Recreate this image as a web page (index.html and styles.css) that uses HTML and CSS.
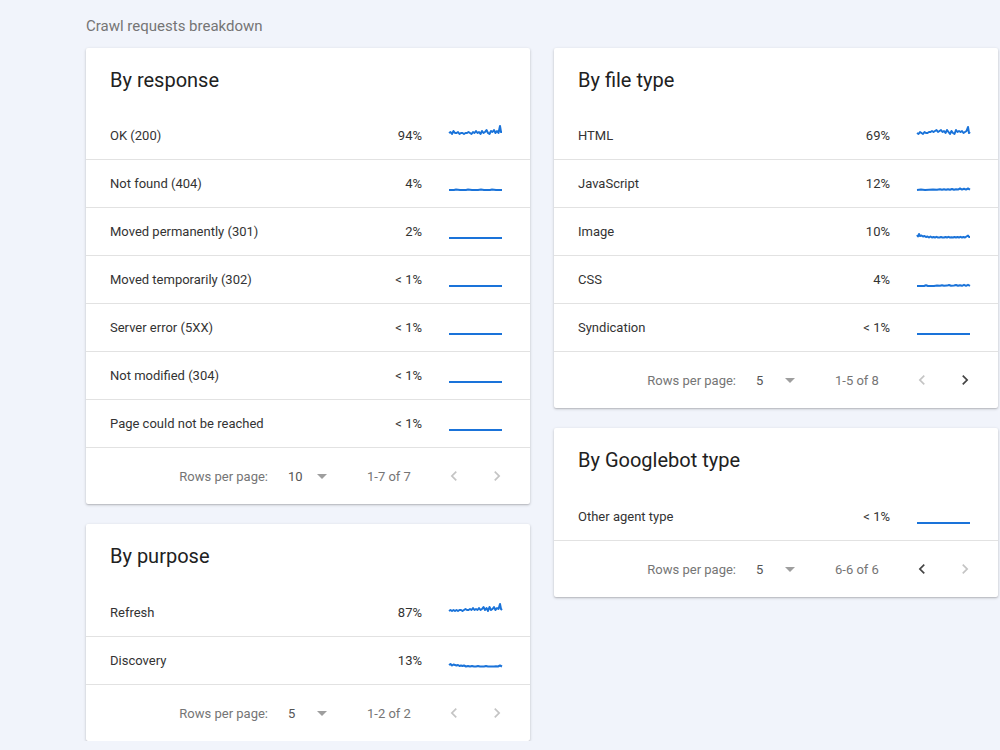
FILE: index.html
```html
<!DOCTYPE html>
<html>
<head>
<meta charset="utf-8">
<link rel="stylesheet" href="styles.css">
</head>
<body>
<div class="page">
  <div class="page-title">Crawl requests breakdown</div>
  <div class="columns">
    <div class="col">
      <section class="card">
        <h2 class="card-title">By response</h2>
        <div class="row"><span class="label">OK (200)</span><span class="pct">94%</span>
          <svg class="spark" viewBox="0 0 55 24"><polyline points="1,11 2.5,10 4,12 5.5,9 7,11 8.5,11 10,10 11.5,12 13,11 14.5,11 16,12 17.5,11 19,11 20.5,10 22,11 23.5,12 25,10 26.5,11 28,9 29.5,11 31,10 32.5,12 34,9 35.5,11 37,10 38.5,8 40,11 41.5,12 43,9 44.5,10 46,8 47.5,11 49,9 50.5,11 52,4 53,10 54,10"/></svg></div>
        <div class="row"><span class="label">Not found (404)</span><span class="pct">4%</span>
          <svg class="spark" viewBox="0 0 55 24"><polyline points="1,20 6,20 8,19.6 12,20 18,20 20,19.6 24,20 30,20 33,19.6 36,20 42,20 44,19.6 48,20 54,20"/></svg></div>
        <div class="row"><span class="label">Moved permanently (301)</span><span class="pct">2%</span>
          <svg class="spark" viewBox="0 0 55 24"><polyline points="1,20 54,20"/></svg></div>
        <div class="row"><span class="label">Moved temporarily (302)</span><span class="pct">&lt; 1%</span>
          <svg class="spark" viewBox="0 0 55 24"><polyline points="1,20 54,20"/></svg></div>
        <div class="row"><span class="label">Server error (5XX)</span><span class="pct">&lt; 1%</span>
          <svg class="spark" viewBox="0 0 55 24"><polyline points="1,20 54,20"/></svg></div>
        <div class="row"><span class="label">Not modified (304)</span><span class="pct">&lt; 1%</span>
          <svg class="spark" viewBox="0 0 55 24"><polyline points="1,20 54,20"/></svg></div>
        <div class="row"><span class="label">Page could not be reached</span><span class="pct">&lt; 1%</span>
          <svg class="spark" viewBox="0 0 55 24"><polyline points="1,20 54,20"/></svg></div>
        <div class="footer">
          <span class="rpp-label">Rows per page:</span>
          <span class="rpp-select"><span class="rpp-value">10</span><svg class="drop" viewBox="0 0 24 24"><path d="M7 10l5 5 5-5z"/></svg></span>
          <span class="range">1-7 of 7</span>
          <svg class="nav off prev" viewBox="0 0 24 24"><path d="M15.41 7.41L14 6l-6 6 6 6 1.41-1.41L10.83 12z"/></svg>
          <svg class="nav off next" viewBox="0 0 24 24"><path d="M10 6L8.59 7.41 13.17 12l-4.58 4.59L10 18l6-6z"/></svg>
        </div>
      </section>
      <section class="card">
        <h2 class="card-title">By purpose</h2>
        <div class="row"><span class="label">Refresh</span><span class="pct">87%</span>
          <svg class="spark" viewBox="0 0 55 24"><polyline points="1,12 2.5,11 4,12 5.5,11 7,12 8.5,11 10,12 11.5,11 13,11 14.5,12 16,11 17.5,10 19,11 20.5,11 22,10 23.5,11 25,9 26.5,11 28,10 29.5,11 31,9 32.5,11 34,10 35.5,8 37,11 38.5,9 40,12 41.5,8 43,11 44.5,10 46,8 47.5,11 49,9 50.5,10 52,5 53,10 54,11"/></svg></div>
        <div class="row"><span class="label">Discovery</span><span class="pct">13%</span>
          <svg class="spark" viewBox="0 0 55 24"><polyline points="1,18 2.5,17 4,18.5 5.5,17.5 7,18 8.5,18.5 10,18 11.5,19 13,18.5 14.5,19 16,18.5 18,19.5 20,19 22,19.5 24,19 26,19.5 28,19.5 30,19 32,19.5 34,19.5 36,19.5 38,19 40,19.5 42,19.5 44,19.5 46,19.5 48,19.2 50,19.5 52,18.5 54,19.5"/></svg></div>
        <div class="footer">
          <span class="rpp-label">Rows per page:</span>
          <span class="rpp-select"><span class="rpp-value">5</span><svg class="drop" viewBox="0 0 24 24"><path d="M7 10l5 5 5-5z"/></svg></span>
          <span class="range">1-2 of 2</span>
          <svg class="nav off prev" viewBox="0 0 24 24"><path d="M15.41 7.41L14 6l-6 6 6 6 1.41-1.41L10.83 12z"/></svg>
          <svg class="nav off next" viewBox="0 0 24 24"><path d="M10 6L8.59 7.41 13.17 12l-4.58 4.59L10 18l6-6z"/></svg>
        </div>
      </section>
    </div>
    <div class="col">
      <section class="card">
        <h2 class="card-title">By file type</h2>
        <div class="row"><span class="label">HTML</span><span class="pct">69%</span>
          <svg class="spark" viewBox="0 0 55 24"><polyline points="1,11 2.5,12 4,10 5.5,11 7,12 8.5,10 10,11 11.5,11 13,10 14.5,10 16,9 17.5,10 19,9 20.5,8 22,10 23.5,9 25,8 26.5,10 28,9 29.5,11 31,8 32.5,10 34,12 35.5,9 37,11 38.5,12 40,8 41.5,10 43,9 44.5,10 46,9 47.5,11 49,10 50.5,9 52,5 53,11 54,10"/></svg></div>
        <div class="row"><span class="label">JavaScript</span><span class="pct">12%</span>
          <svg class="spark" viewBox="0 0 55 24"><polyline points="1,20 5,19.6 9,20 13,19.8 17,19.6 21,19.8 24,19.2 26,19.8 28,19.3 30,19.8 32,19.2 34,19.8 36,19 38,19.8 40,19.2 42,19.6 44,18.5 46,19.6 48,18.8 50,19.6 52,18.5 54,19.6"/></svg></div>
        <div class="row"><span class="label">Image</span><span class="pct">10%</span>
          <svg class="spark" viewBox="0 0 55 24"><polyline points="1,17 2,18.5 3,16 4,18 5.5,17.5 7,18.5 8.5,18 10,19 11.5,18.5 13,19.5 14.5,18.5 16,19.5 17.5,19 19,19.5 20.5,18.8 22,19.5 23.5,19.5 25,19 26.5,19.5 28,19.5 29.5,19 31,19.5 32.5,18.8 34,19.5 35.5,19.2 37,19.5 38.5,19 40,19.5 41.5,19 43,19.5 44.5,18.8 46,19.5 47.5,19 49,19.5 50.5,18.5 52,17.5 53,19 54,19"/></svg></div>
        <div class="row"><span class="label">CSS</span><span class="pct">4%</span>
          <svg class="spark" viewBox="0 0 55 24"><polyline points="1,20 8,20 10,19.2 12,20 18,20 21,19.6 24,19.8 26,19.3 28,19.8 31,19.6 33,19 35,19.8 38,19.5 40,19 42,19.8 44,19.2 46,19.8 48,18.8 50,19.8 52,18.8 54,19.8"/></svg></div>
        <div class="row"><span class="label">Syndication</span><span class="pct">&lt; 1%</span>
          <svg class="spark" viewBox="0 0 55 24"><polyline points="1,20 54,20"/></svg></div>
        <div class="footer">
          <span class="rpp-label">Rows per page:</span>
          <span class="rpp-select"><span class="rpp-value">5</span><svg class="drop" viewBox="0 0 24 24"><path d="M7 10l5 5 5-5z"/></svg></span>
          <span class="range">1-5 of 8</span>
          <svg class="nav off prev" viewBox="0 0 24 24"><path d="M15.41 7.41L14 6l-6 6 6 6 1.41-1.41L10.83 12z"/></svg>
          <svg class="nav on next" viewBox="0 0 24 24"><path d="M10 6L8.59 7.41 13.17 12l-4.58 4.59L10 18l6-6z"/></svg>
        </div>
      </section>
      <section class="card">
        <h2 class="card-title">By Googlebot type</h2>
        <div class="row"><span class="label">Other agent type</span><span class="pct">&lt; 1%</span>
          <svg class="spark" viewBox="0 0 55 24"><polyline points="1,20 54,20"/></svg></div>
        <div class="footer">
          <span class="rpp-label">Rows per page:</span>
          <span class="rpp-select"><span class="rpp-value">5</span><svg class="drop" viewBox="0 0 24 24"><path d="M7 10l5 5 5-5z"/></svg></span>
          <span class="range">6-6 of 6</span>
          <svg class="nav on prev" viewBox="0 0 24 24"><path d="M15.41 7.41L14 6l-6 6 6 6 1.41-1.41L10.83 12z"/></svg>
          <svg class="nav off next" viewBox="0 0 24 24"><path d="M10 6L8.59 7.41 13.17 12l-4.58 4.59L10 18l6-6z"/></svg>
        </div>
      </section>
    </div>
  </div>
</div>
</body>
</html>
```
FILE: styles.css
```css
* { box-sizing: border-box; }
html, body { margin: 0; padding: 0; }
body {
  background: #f1f4fb;
  font-family: Roboto, "Liberation Sans", sans-serif;
  color: #212121;
}
.page {
  padding: 16px 2px 0 86px;
}
.page-title {
  font-size: 15px;
  line-height: 20px;
  color: #757575;
  height: 32px;
}
.columns {
  display: flex;
  gap: 24px;
  align-items: flex-start;
}
.col {
  width: 444px;
  display: flex;
  flex-direction: column;
  gap: 20px;
}
.card {
  background: #fff;
  border-radius: 2px;
  box-shadow: 0 1px 3px rgba(0,0,0,0.22), 0 1px 1px rgba(0,0,0,0.08);
}
.card-title {
  margin: 0;
  padding: 20px 24px 0 24px;
  height: 64px;
  font-size: 20px;
  line-height: 24px;
  font-weight: 400;
  color: #212121;
}
.card + .card .card-title {
  height: 65px;
}
.row {
  height: 48px;
  display: flex;
  align-items: center;
  padding: 0 27px 0 24px;
  border-bottom: 1px solid #e2e2e2;
  font-size: 13px;
  color: #333;
}
.label { flex: 1; }
.pct {
  width: 60px;
  text-align: right;
  margin-right: 26px;
}
.spark {
  width: 55px;
  height: 24px;
  margin-top: -4px;
  overflow: visible;
}
.spark polyline {
  fill: none;
  stroke: #1a73d9;
  stroke-width: 2;
  stroke-linejoin: round;
}
.footer {
  height: 56px;
  display: flex;
  align-items: center;
  justify-content: flex-end;
  padding-right: 21px;
  font-size: 13px;
  color: #757575;
}
.rpp-label { margin-right: 20px; flex: none; }
.rpp-select {
  flex: none;
  width: 46px;
  margin-right: 33px;
  display: flex;
  align-items: center;
  justify-content: space-between;
}
.rpp-value { color: #555; }
.drop { width: 24px; height: 24px; fill: #9e9e9e; flex: none; }
.range { width: 73px; flex: none; }
.nav { width: 20px; height: 20px; flex: none; }
.nav.prev { margin-left: 4px; }
.nav.next { margin-left: 23px; margin-right: 2px; }
.nav.off { fill: #c4c4c4; }
.nav.on { fill: #444; }
```
